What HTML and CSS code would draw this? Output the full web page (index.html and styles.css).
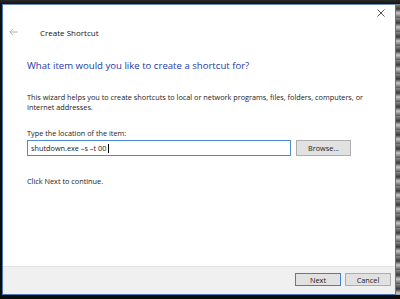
FILE: index.html
```html
<!doctype html>
<html lang="en">
<head>
<meta name="viewport" content="width=device-width, initial-scale=1.0">
<title>Create Shortcut</title>
<link rel="stylesheet" href="styles.css">
</head>
<body>
	<div class="desk">
		<div class="wizard">
			<div class="page">
				<div class="closebar">
					<svg class="closeicon" width="8" height="8" viewBox="0 0 8 8"><path d="M0.5 0.5 L7.5 7.5 M7.5 0.5 L0.5 7.5" stroke="#555" stroke-width="1"/></svg>
				</div>
				<div class="header">
					<svg class="backarrow" width="9" height="8" viewBox="0 0 9 8"><path d="M8.5 4 H1 M4 0.8 L0.8 4 L4 7.2" stroke="#b0b0b0" stroke-width="1" fill="none"/></svg>
					<span class="headtitle">Create Shortcut</span>
				</div>
				<div class="content">
					<h1 class="question">What item would you like to create a shortcut for?</h1>
					<p class="intro">This wizard helps you to create shortcuts to local or network programs, files, folders, computers, or<br>Internet addresses.</p>
					<p class="label">Type the location of the item:</p>
					<div class="inputrow">
						<div class="textbox">shutdown.exe –s –t 00<span class="caret"></span></div>
						<div class="btn">Browse...</div>
					</div>
					<p class="hint">Click Next to continue.</p>
				</div>
			</div>
			<div class="footer">
				<div class="btn btn-default">Next</div>
				<div class="btn">Cancel</div>
			</div>
		</div>
		<div class="edge"></div>
	</div>
</body>
</html>
```

FILE: styles.css
```css
body, html {
	margin: 0;
	width: 400px;
	height: 299px;
	overflow: hidden;
}

body {
	background: #151515;
	font-family: "Open Sans", "Noto Sans", sans-serif;
	color: #1a1a1a;
}

/* desktop photo behind the window */
.desk {
	display: flex;
	height: 299px;
	padding: 4px 0 4px 2px;
	box-sizing: border-box;
	background: linear-gradient(180deg, #2a2a2a 0px, #111 4px, #0c0c0c 100%);
}

.edge {
	width: 4px;
	background: repeating-linear-gradient(180deg, #8a8a8a 0px, #3a3a3a 5px, #c8c8c8 9px, #555 14px);
}

/* the wizard window */
.wizard {
	width: 394px;
	display: flex;
	flex-direction: column;
	border: 1px solid #4a78b8;
	border-top-color: #6e8fc0;
	box-sizing: border-box;
	background: #fff;
}

.page {
	flex: 1;
	display: flex;
	flex-direction: column;
}

.closebar {
	display: flex;
	justify-content: flex-end;
	padding: 4px 10px 0 0;
	height: 12px;
}
.closeicon {
	display: block;
}

.header {
	display: flex;
	align-items: center;
	height: 22px;
	padding-left: 6px;
}
.backarrow {
	display: block;
}
.headtitle {
	margin-left: 22px;
	font-size: 8px;
	color: #111;
}

.content {
	padding-left: 24px;
}

.question {
	margin: 16px 0 0 0;
	font-size: 9.6px;
	font-weight: normal;
	color: #1d3aa8;
	line-height: 14px;
}

.intro {
	margin: 19px 0 0 0;
	font-size: 7.3px;
	line-height: 10px;
}

.label {
	margin: 16px 0 0 0;
	font-size: 7.3px;
	line-height: 10px;
}

.inputrow {
	display: flex;
	gap: 5px;
	margin-top: 2px;
}

.textbox {
	width: 264px;
	height: 16px;
	box-sizing: border-box;
	border: 1px solid #4c8ad6;
	font-size: 7.3px;
	line-height: 14px;
	padding-left: 3px;
	display: flex;
	align-items: center;
}
.caret {
	display: inline-block;
	width: 1px;
	height: 9px;
	margin-left: 2px;
	background: #000;
}

.btn {
	width: 55px;
	height: 16px;
	box-sizing: border-box;
	border: 1px solid #adadad;
	background: #e1e1e1;
	font-size: 7.3px;
	display: flex;
	align-items: center;
	justify-content: center;
}

.hint {
	margin: 20px 0 0 0;
	font-size: 7.3px;
	line-height: 10px;
}

/* bottom bar */
.footer {
	height: 28px;
	box-sizing: border-box;
	background: #f0f0f0;
	border-top: 1px solid #e4e4e4;
	display: flex;
	justify-content: flex-end;
	align-items: flex-start;
	gap: 4px;
	padding: 6px 4px 0 0;
}
.footer .btn {
	width: 46px;
	height: 13px;
}
.btn-default {
	border: 1px solid #3c7fd4;
}
```
